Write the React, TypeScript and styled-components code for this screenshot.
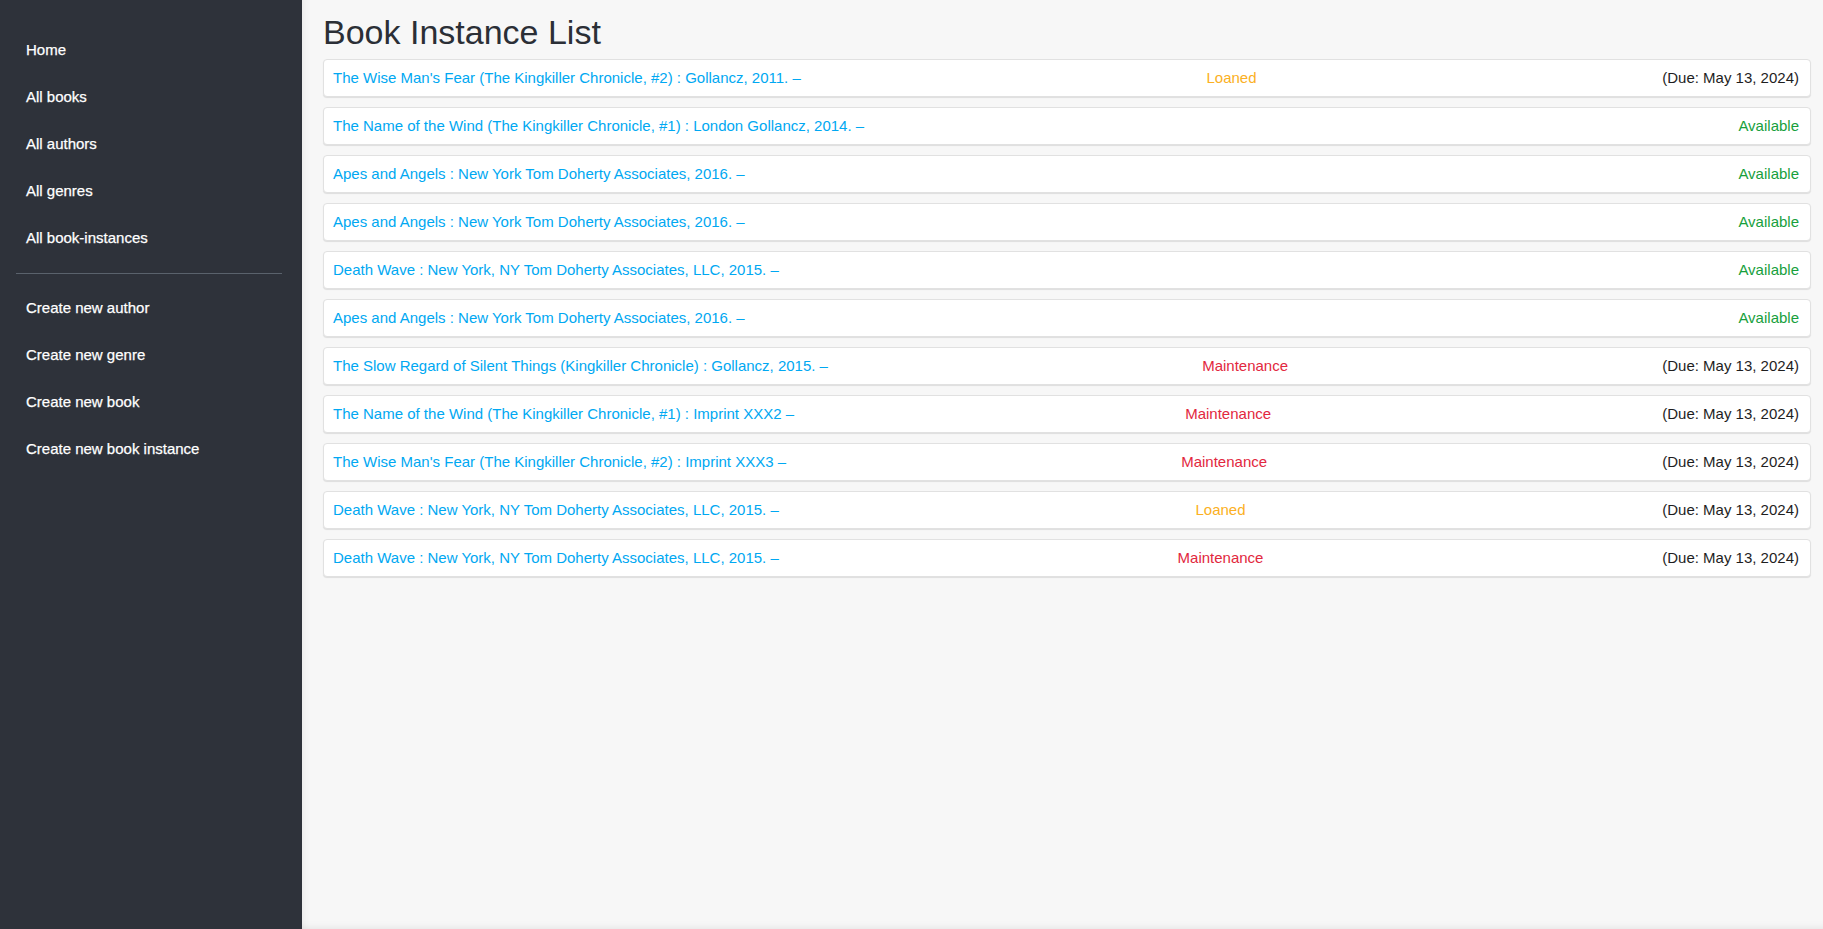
import React from "react";
import styled, { createGlobalStyle } from "styled-components";

const GlobalStyle = createGlobalStyle`
  html, body { margin: 0; padding: 0; height: 100%; }
  body {
    font-family: "Liberation Sans", Arial, sans-serif;
    background: #f7f7f7;
  }
  #root { height: 100%; }
`;

const Layout = styled.div`
  display: grid;
  grid-template-columns: 302px 1fr;
  height: 929px;
  overflow: hidden;
`;

const Sidebar = styled.nav`
  background: #2e323a;
  padding: 27px 20px 0 16px;
  display: flex;
  flex-direction: column;
`;

const NavLink = styled.a`
  display: block;
  padding: 13px 10px 14px;
  line-height: 20px;
  font-size: 15px;
  font-weight: 400;
  color: #ffffff;
  text-decoration: none;
  -webkit-text-stroke: 0.25px #ffffff;
`;

const Divider = styled.hr`
  border: none;
  height: 1px;
  background: #5a626c;
  margin: 11px 0;
`;

const Main = styled.main`
  background: #f7f7f7;
  padding: 0 12px 0 21px;
  box-shadow: inset 8px 0 8px -8px rgba(0, 0, 0, 0.08),
    inset 0 -8px 8px -8px rgba(0, 0, 0, 0.1);
`;

const Title = styled.h1`
  margin: 14px 0 9px;
  font-size: 34px;
  line-height: 36px;
  font-weight: 400;
  color: #2b2f36;
`;

const List = styled.ul`
  list-style: none;
  margin: 0;
  padding: 0;
  display: flex;
  flex-direction: column;
  gap: 10px;
`;

const Card = styled.li`
  display: flex;
  justify-content: space-between;
  align-items: center;
  background: #fff;
  border: 1px solid #e1e1e1;
  border-radius: 4px;
  box-shadow: 0 1px 1px rgba(0, 0, 0, 0.1);
  padding: 8px 11px 8px 9px;
  font-size: 15px;
  line-height: 20px;
`;

const BookLink = styled.a`
  color: #00a8f2;
  text-decoration: none;
`;

type Status = "Loaned" | "Available" | "Maintenance";

const statusColors: Record<Status, string> = {
  Loaned: "#fbb023",
  Available: "#17a03c",
  Maintenance: "#e2283e",
};

const StatusText = styled.span<{ $status: Status }>`
  color: ${(p) => statusColors[p.$status]};
`;

const Due = styled.span`
  color: #1e1e1e;
`;

const items: { title: string; status: Status; due?: boolean }[] = [
  { title: "The Wise Man's Fear (The Kingkiller Chronicle, #2) : Gollancz, 2011. –", status: "Loaned", due: true },
  { title: "The Name of the Wind (The Kingkiller Chronicle, #1) : London Gollancz, 2014. –", status: "Available" },
  { title: "Apes and Angels : New York Tom Doherty Associates, 2016. –", status: "Available" },
  { title: "Apes and Angels : New York Tom Doherty Associates, 2016. –", status: "Available" },
  { title: "Death Wave : New York, NY Tom Doherty Associates, LLC, 2015. –", status: "Available" },
  { title: "Apes and Angels : New York Tom Doherty Associates, 2016. –", status: "Available" },
  { title: "The Slow Regard of Silent Things (Kingkiller Chronicle) : Gollancz, 2015. –", status: "Maintenance", due: true },
  { title: "The Name of the Wind (The Kingkiller Chronicle, #1) : Imprint XXX2 –", status: "Maintenance", due: true },
  { title: "The Wise Man's Fear (The Kingkiller Chronicle, #2) : Imprint XXX3 –", status: "Maintenance", due: true },
  { title: "Death Wave : New York, NY Tom Doherty Associates, LLC, 2015. –", status: "Loaned", due: true },
  { title: "Death Wave : New York, NY Tom Doherty Associates, LLC, 2015. –", status: "Maintenance", due: true },
];

const navTop = ["Home", "All books", "All authors", "All genres", "All book-instances"];
const navBottom = ["Create new author", "Create new genre", "Create new book", "Create new book instance"];

export default function App() {
  return (
    <>
      <GlobalStyle />
      <Layout>
        <Sidebar>
          {navTop.map((n) => (
            <NavLink key={n} href="#">{n}</NavLink>
          ))}
          <Divider />
          {navBottom.map((n) => (
            <NavLink key={n} href="#">{n}</NavLink>
          ))}
        </Sidebar>
        <Main>
          <Title>Book Instance List</Title>
          <List>
            {items.map((it, i) => (
              <Card key={i}>
                <BookLink href="#">{it.title}</BookLink>
                <StatusText $status={it.status}>{it.status}</StatusText>
                {it.due && <Due>(Due: May 13, 2024)</Due>}
              </Card>
            ))}
          </List>
        </Main>
      </Layout>
    </>
  );
}
